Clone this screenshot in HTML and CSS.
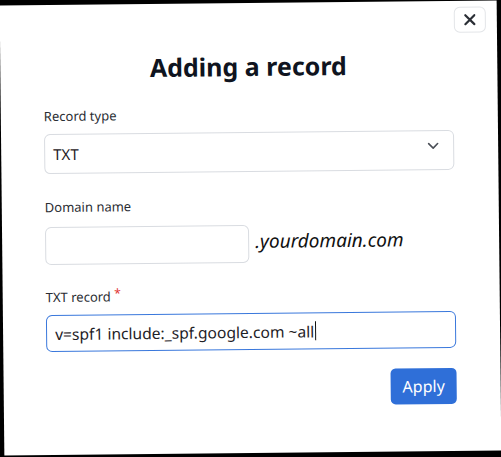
FILE: index.html
```html
<!DOCTYPE html>
<html>
<head>
<meta charset="utf-8">
<link rel="stylesheet" href="styles.css">
</head>
<body>
<div class="modal">
  <button class="close" aria-label="Close">
    <svg width="12" height="12" viewBox="0 0 12 12"><path d="M1.5 1.5 L10.5 10.5 M10.5 1.5 L1.5 10.5" stroke="#2b2f36" stroke-width="2.2" stroke-linecap="round"/></svg>
  </button>
  <h1 class="title">Adding a record</h1>
  <form class="form">
    <div class="field first">
      <label class="label">Record type</label>
      <div class="select">
        <span>TXT</span>
        <svg width="12" height="8" viewBox="0 0 12 8"><path d="M1.5 1.5 L6 6 L10.5 1.5" fill="none" stroke="#4a4f57" stroke-width="1.6" stroke-linecap="round" stroke-linejoin="round"/></svg>
      </div>
    </div>
    <div class="field second">
      <label class="label">Domain name</label>
      <div class="domain-row">
        <div class="input short"></div>
        <span class="suffix">.yourdomain.com</span>
      </div>
    </div>
    <div class="field">
      <label class="label">TXT record <span class="req">*</span></label>
      <div class="input focus"><span>v=spf1 include:_spf.google.com ~all</span><span class="caret"></span></div>
    </div>
    <div class="actions">
      <button type="button" class="apply">Apply</button>
    </div>
  </form>
</div>
</body>
</html>
```

FILE: styles.css
```css
html, body {
  margin: 0;
  padding: 0;
  background: #000;
  width: 501px;
  height: 457px;
  overflow: hidden;
}
.modal {
  position: relative;
  box-sizing: border-box;
  width: 497px;
  height: 450px;
  margin: 3px 0 0 2px;
  background: #fff;
  transform: rotate(-0.6deg);
  padding: 0 44px 0 43px;
  font-family: "Noto Sans", "Open Sans", sans-serif;
  color: #24272c;
}
.close {
  position: absolute;
  top: 6px;
  right: 11px;
  width: 32px;
  height: 26px;
  border: 1px solid #e3e5e8;
  border-radius: 6px;
  background: #fff;
  display: flex;
  align-items: center;
  justify-content: center;
  padding: 0;
}
.title {
  margin: 0;
  padding-top: 45px;
  text-align: center;
  font-size: 25px;
  line-height: 36px;
  font-weight: 700;
  color: #0f1420;
}
.form {
  margin-top: 21px;
  display: flex;
  flex-direction: column;
}
.field {
  display: flex;
  flex-direction: column;
  margin-bottom: 22px;
}
.field.first {
  margin-bottom: 24px;
}
.field.second {
  margin-bottom: 20px;
}
.field.second .label {
  margin-bottom: 11px;
}
.label {
  font-size: 13px;
  line-height: 18px;
  color: #2a2d33;
  margin-bottom: 9px;
}
.req {
  color: #e0322f;
  font-size: 12px;
  vertical-align: 4px;
}
.select {
  box-sizing: border-box;
  height: 40px;
  border: 1px solid #d9dce1;
  border-radius: 6px;
  display: flex;
  align-items: center;
  justify-content: space-between;
  padding: 0 14px 0 8px;
  font-size: 15px;
  color: #1e2126;
}
.select svg {
  margin-top: -8px;
}
.domain-row {
  display: flex;
  align-items: center;
  gap: 6px;
}
.input {
  box-sizing: border-box;
  height: 38px;
  border: 1px solid #d9dce1;
  border-radius: 6px;
  display: flex;
  align-items: center;
  padding: 0 8px;
  font-size: 15.6px;
  color: #1e2126;
}
.input.short {
  width: 204px;
}
.suffix {
  font-style: italic;
  font-size: 19px;
  color: #111;
  margin-top: -6px;
}
.input.focus {
  border: 1.5px solid #3a78dc;
  height: 37px;
}
.caret {
  display: inline-block;
  width: 1px;
  height: 19px;
  background: #111;
  margin-left: 1px;
}
.actions {
  display: flex;
  justify-content: flex-end;
  margin-top: -2px;
}
.apply {
  width: 66px;
  height: 36px;
  border: none;
  border-radius: 5px;
  background: #2f6fd8;
  color: #fff;
  font-family: "Noto Sans", "Open Sans", sans-serif;
  font-size: 16px;
  padding: 0;
}
```
